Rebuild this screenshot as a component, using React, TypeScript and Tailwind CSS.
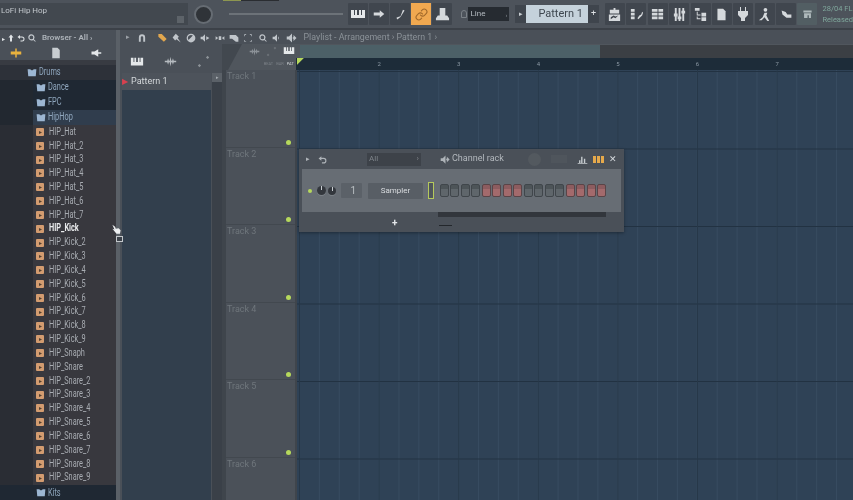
import type { ReactNode } from "react";
import { Link } from "lucide-react";

const hats = ["HIP_Hat", "HIP_Hat_2", "HIP_Hat_3", "HIP_Hat_4", "HIP_Hat_5", "HIP_Hat_6", "HIP_Hat_7"];
const kicks = ["HIP_Kick", "HIP_Kick_2", "HIP_Kick_3", "HIP_Kick_4", "HIP_Kick_5", "HIP_Kick_6", "HIP_Kick_7", "HIP_Kick_8", "HIP_Kick_9"];
const snares = ["HIP_Snaph", "HIP_Snare", "HIP_Snare_2", "HIP_Snare_3", "HIP_Snare_4", "HIP_Snare_5", "HIP_Snare_6", "HIP_Snare_7", "HIP_Snare_8", "HIP_Snare_9"];
const samples = [...hats, ...kicks, ...snares];

function Glyph({ size = 14, children, className }: { size?: number; children: ReactNode; className?: string }) {
  return (
    <svg width={size} height={size} viewBox="0 0 16 16" fill="currentColor" className={className}>
      {children}
    </svg>
  );
}

function ToolButton({ children, active = false }: { children: ReactNode; active?: boolean }) {
  return (
    <div
      className={
        active
          ? "flex h-[22px] w-[20px] items-center justify-center bg-[#f0a850] text-[#a0682a]"
          : "flex h-[22px] w-[20px] items-center justify-center rounded-[1px] bg-[#40464e] text-[#d5d9dc]"
      }
    >
      {children}
    </div>
  );
}

function Knob({ size }: { size: number }) {
  return (
    <div
      className="flex justify-center rounded-full bg-[#33373d] shadow-[0_1px_0_#7b8187]"
      style={{ width: size, height: size }}
    >
      <div className="h-[4px] w-[1px] bg-[#c9ced2]" />
    </div>
  );
}

function FolderIcon() {
  return (
    <Glyph size={10} className="mr-[2px] shrink-0 text-[#9cb6d2]">
      <path d="M1 2h4l3 2 3-2h4l-1 11H2z" />
    </Glyph>
  );
}

function FolderRow({ name, left, bg }: { name: string; left: string; bg: string }) {
  return (
    <div className={`flex h-[15px] shrink-0 items-center ${bg} ${left}`}>
      <FolderIcon />
      <span className="origin-left scale-x-[0.67] text-[11px] text-[#8fa6bd]">{name}</span>
    </div>
  );
}

function Browser() {
  return (
    <div className="flex w-[116px] shrink-0 flex-col bg-[#303239]">
      <div className="flex h-[16px] shrink-0 items-center gap-[2px] bg-[#4a5058] pl-[2px] text-[#dfe3e6]">
        <span className="text-[6px]">▸</span>
        <Glyph size={8}><path d="M8 1l5 6H10v8H6V7H3z" /></Glyph>
        <Glyph size={8}><path d="M6 2L1 6l5 4V7h4a3 3 0 010 6H7v2h3a5 5 0 000-10H6z" /></Glyph>
        <Glyph size={10} className="text-[#c5cacf]">
          <path d="M7 2a5 5 0 103 9l3 3 1-1-3-3a5 5 0 00-4-8zm0 2a3 3 0 110 6 3 3 0 010-6z" />
        </Glyph>
        <span className="ml-[3px] text-[8px] font-semibold text-[#aeb4ba]">Browser - All ›</span>
      </div>
      <div className="flex h-[14px] shrink-0 items-center justify-between bg-[#4a5058] pl-[10px] pr-[14px]">
        <Glyph size={12} className="text-[#e9b23e]">
          <path d="M7 2h2v4h6v4H9v4H7v-4H1V6h6z" />
        </Glyph>
        <Glyph size={12} className="text-[#c8cdd1]">
          <path d="M3 1h7l3 3v11H3z" />
        </Glyph>
        <Glyph size={12} className="text-[#e4e7ea]">
          <path d="M15 7H11V3L6 6H2v4h4l5 3V9h4z" />
        </Glyph>
      </div>
      <div className="h-[5px] shrink-0 bg-[#383b42]" />
      <div className="flex min-h-0 flex-1 flex-col">
        <FolderRow name="Drums" left="pl-[27px]" bg="bg-[#2d3139]" />
        <div className="flex shrink-0">
          <div className="w-[33px] bg-[#222830]" />
          <div className="flex-1">
            <FolderRow name="Dance" left="pl-[3px]" bg="bg-[#1f2833]" />
            <FolderRow name="FPC" left="pl-[3px]" bg="bg-[#1f2833]" />
          </div>
        </div>
        <div className="flex shrink-0">
          <div className="w-[33px] bg-[#222830]" />
          <div className="flex-1">
            <FolderRow name="HipHop" left="pl-[3px]" bg="bg-[#303d4d]" />
          </div>
        </div>
        <div className="flex shrink-0">
          <div className="w-[33px] bg-[#2a2d34]" />
          <div className="flex-1 bg-[#38383e] pl-[3px]">
            {samples.map((s) => (
              <div key={s} className="flex h-[13.84px] items-center">
                <div className="mr-[5px] flex h-[8px] w-[8px] shrink-0 items-center justify-center rounded-[1px] bg-[#d39c70] text-[6px] leading-none text-[#54402f]">
                  ▸
                </div>
                <span
                  className={
                    s === "HIP_Kick"
                      ? "origin-left scale-x-[0.67] text-[11px] font-bold text-[#e8eaec]"
                      : "origin-left scale-x-[0.67] text-[11px] text-[#a8acb2]"
                  }
                >
                  {s}
                </span>
              </div>
            ))}
          </div>
        </div>
        <div className="flex flex-1 items-center bg-[#1f2833] pl-[36px]">
          <FolderIcon />
          <span className="origin-left scale-x-[0.67] text-[11px] text-[#8fa6bd]">Kits</span>
        </div>
      </div>
    </div>
  );
}

function TopBar() {
  return (
    <div className="relative flex h-[30px] shrink-0 items-center border-b-2 border-[#3c4148] bg-[#4d535b]">
      <div className="absolute left-[223px] top-0 flex h-[1px]">
        <div className="w-[18px] bg-[#8d9650]" />
        <div className="w-[38px] bg-[#2a2d31]" />
      </div>
      <div className="flex h-[22px] w-[189px] bg-[#42484f] pl-[1px] pt-[2px]">
        <span className="text-[8px] text-[#c2c7cc]">LoFi Hip Hop</span>
        <div className="ml-auto mr-[4px] mt-[11px] h-[7px] w-[7px] bg-[#5d6369]" />
      </div>
      <div className="ml-[5px] flex w-[20px] justify-center">
        <div className="h-[19px] w-[19px] rounded-full border-2 border-[#666c73] bg-[#2f3338]" />
      </div>
      <div className="ml-[16px] h-[2px] w-[115px] bg-[#6c7278]" />
      <div className="ml-[5px] flex gap-[1px]">
        <ToolButton>
          <Glyph size={16} className="text-[#e4e7e9]">
            <path d="M1 4h14v8H1zM4 4v5h1V4zm3 0v5h2V4zm4 0v5h1V4z" />
          </Glyph>
        </ToolButton>
        <ToolButton>
          <Glyph size={12}><path d="M1 6h8V3l6 5-6 5v-3H1z" /></Glyph>
        </ToolButton>
        <ToolButton>
          <Glyph size={13}><path d="M11 2l2 1-5 8-4 3-1-2 2-1 3-1z" /></Glyph>
        </ToolButton>
        <ToolButton active>
          <Link size={13} strokeWidth={2} />
        </ToolButton>
        <ToolButton>
          <Glyph size={15}>
            <path d="M5 1h6v8h2l2 3v2H1v-2l2-3h2z" />
          </Glyph>
        </ToolButton>
      </div>
      <div className="ml-[9px] h-[8px] w-[6px] rounded-t-full border border-[#7b8187]" />
      <div className="ml-[1px] flex h-[14px] w-[41px] items-center justify-between bg-[#262b31] px-[2px]">
        <span className="text-[8px] text-[#b5bbc1]">Line</span>
        <span className="text-[6px] text-[#8d949a]">›</span>
      </div>
      <div className="ml-[6px] flex h-[18px] w-[11px] items-center justify-center bg-[#3f454d] text-[7px] text-[#c8cdd1]">▸</div>
      <div className="flex h-[18px] w-[62px] items-center justify-end bg-[#c5d2db] pr-[5px] text-[11px] text-[#3f4850]">
        Pattern 1
      </div>
      <div className="flex h-[18px] w-[11px] items-center justify-center bg-[#3f454d] text-[9px] text-[#e0e3e6]">+</div>
      <div className="ml-[6px] flex gap-[1.4px]">
        <ToolButton><Glyph size={15}><path d="M3 3h4V1h2v2h4v4H3zM2 8h12v7H2zm2 5l3-2 2 1 3-3-3 1-2-1-3 2z" /></Glyph></ToolButton>
        <ToolButton><Glyph size={15}><path d="M2 2h4v3H2zm0 4h4v3H2zm0 4h4v3H2zm7 2l2-3 2-1 1-3 1 1-1 3-2 2-2 2z" /></Glyph></ToolButton>
        <ToolButton><Glyph size={15}><path d="M2 2h6v3H2zm7 0h5v3H9zM2 6h6v3H2zm7 0h5v3H9zM2 10h6v3H2zm7 0h5v3H9z" /></Glyph></ToolButton>
        <ToolButton><Glyph size={15}><path d="M3 1h2v6h1v3H5v5H3v-5H2V7h1zm8 0h2v3h1v3h-1v8h-2V7h-1V4h1zM7 1h2v9h1v3H9v2H7v-2H6v-3h1z" /></Glyph></ToolButton>
        <ToolButton><Glyph size={15}><path d="M2 1h5v3H2zm2 4h1v3h3v1H4zm0 5h1v2h3v1H4zm5-4h5v4H9zm0 5h5v4H9z" /></Glyph></ToolButton>
        <ToolButton><Glyph size={13}><path d="M3 1h7l3 3v11H3z" /></Glyph></ToolButton>
        <ToolButton><Glyph size={16}><path d="M5 1h1v4h4V1h1v4h2v4l-3 3v3H6v-3L3 9V5h2z" /></Glyph></ToolButton>
        <ToolButton><Glyph size={15}><path d="M9 1a2 2 0 110 4 2 2 0 010-4zM8 6l-2 5-4 3h3l3-3 3 4h2l-3-6 1-3z" /></Glyph></ToolButton>
        <ToolButton><Glyph size={13}><path d="M2 3l5 2 2 3h5v4H8L3 8z" /></Glyph></ToolButton>
        <div className="flex h-[22px] w-[20px] items-center justify-center rounded-[1px] bg-[#525e63] text-[#aeb9bb]">
          <Glyph size={11}><path d="M2 2h12v3H2zm1 4h10v7h-3v-4H8v4H3z" /></Glyph>
        </div>
      </div>
      <div className="ml-[5px] flex flex-col text-[7.5px] leading-[11px] text-[#7fa69b]">
        <span className="whitespace-nowrap">28/04 FL</span>
        <span>Released</span>
      </div>
    </div>
  );
}

function PlaylistHeader() {
  return (
    <div className="flex h-[14px] shrink-0 items-center gap-[4.3px] bg-[#4a5058] pl-[6px] pt-[1px] text-[#c0c5ca]">
      <span className="mr-[3px] text-[7px] text-[#9aa0a6]">▸</span>
      <Glyph size={10} className="mr-[5px]"><path d="M3 14V7a5 5 0 0110 0v7h-3V7a2 2 0 00-4 0v7z" /></Glyph>
      <Glyph size={11} className="text-[#e2a74e]"><path d="M2 3h5l7 7-4 4-8-7z" /></Glyph>
      <Glyph size={10}><path d="M6 1l5 5-2 2 5 7-7-5-2 2-4-5z" /></Glyph>
      <Glyph size={10}><path d="M8 1a7 7 0 100 14A7 7 0 008 1zm0 2a5 5 0 013 1l-7 7a5 5 0 014-8z" /></Glyph>
      <Glyph size={10}><path d="M1 6h3l4-4v12l-4-4H1zm9-1l5 3-5 3z" /></Glyph>
      <Glyph size={10}><path d="M1 5l4 3-4 3zm14 0v6l-4-3zM6 5h4v6H6z" /></Glyph>
      <Glyph size={10}><path d="M1 3h10l4 4v7h-4L5 9H1z" /></Glyph>
      <Glyph size={10}><path d="M2 2h3v1H3v2H2zm9 0h3v3h-1V3h-2zM2 11h1v2h2v1H2zm11 0h1v3h-3v-1h2z" /></Glyph>
      <Glyph size={10}><path d="M7 2a5 5 0 103 9l3 3 1-1-3-3a5 5 0 00-4-8zm0 2a3 3 0 110 6 3 3 0 010-6z" /></Glyph>
      <Glyph size={10}><path d="M1 6h3l4-4v12l-4-4H1zm9 0h1v4h-1z" /></Glyph>
      <Glyph size={12}><path d="M1 6h3l4-4v12l-4-4H1zm9-2l4 4-4 4V9h-1V7h1z" /></Glyph>
      <span className="ml-[1px] whitespace-nowrap text-[8.8px] text-[#8b9298]">Playlist - Arrangement › Pattern 1 ›</span>
    </div>
  );
}

function Picker() {
  return (
    <div className="flex w-[102px] shrink-0 flex-col bg-[#4a5058]">
      <div className="flex h-[29px] shrink-0 items-center justify-between pl-[10px] pr-[12px] pt-[6px] text-[#e5e8ea]">
        <Glyph size={14}><path d="M1 3h14v9H1zM4 3v5h1V3zm3 0v5h2V3zm4 0v5h1V3z" /></Glyph>
        <Glyph size={13} className="text-[#b5babf]"><path d="M1 7h3l1-3 1 3h1l1-5 1 5h1l1-3 1 3h3v2h-3l-1 3-1-3H9l-1 5-1-5H6l-1 3-1-3H1z" /></Glyph>
        <Glyph size={13} className="text-[#8d9398]"><path d="M13 1l2 2-2 2-1-1-8 8 1 1-2 2-2-2 2-2 1 1 8-8-1-1z" /></Glyph>
      </div>
      <div className="flex flex-1">
        <div className="ml-[2px] flex w-[89px] flex-col bg-[#323f4d]">
          <div className="flex h-[17px] items-center bg-[#4d535b]">
            <span className="mr-[3px] text-[8px] leading-none text-[#d8414f]">▶</span>
            <span className="text-[9px] text-[#d3d7da]">Pattern 1</span>
          </div>
        </div>
        <div className="ml-[1px] w-[10px] bg-[#3a4048]">
          <div className="flex h-[9px] items-center justify-center bg-[#5b6168] text-[5px] text-[#a8adb2]">▸</div>
        </div>
      </div>
    </div>
  );
}

function TrackCell({ n }: { n: number }) {
  return (
    <div className="relative h-[77.5px] shrink-0 border-b border-[#42484f] bg-[#4b5159] pl-[1px] pt-[1px]">
      <span className="block text-[9px] leading-[11px] text-[#6f767c]">Track {n}</span>
      <div className="absolute bottom-[2px] right-[4px] h-[5px] w-[5px] rounded-full bg-[#b6d95c]" />
    </div>
  );
}

function Arrangement() {
  return (
    <div className="relative flex min-w-0 flex-1 flex-col bg-[#50565d]">
      <div className="absolute left-0 top-0 h-[26px] w-[20px] bg-[#42484f] [clip-path:polygon(0_0,100%_0,30%_100%,0_100%)]" />
      <div className="relative flex h-[14px] shrink-0 items-center">
        <div className="flex h-full w-[78px] items-center gap-[6px] pl-[27px] text-[#8b9197]">
          <Glyph size={11}><path d="M1 7h3l1-3 1 3h1l1-5 1 5h1l1-3 1 3h3v2h-3l-1 3-1-3H9l-1 5-1-5H6l-1 3-1-3H1z" /></Glyph>
          <Glyph size={11} className="text-[#6d7379]"><path d="M13 1l2 2-2 2-1-1-8 8 1 1-2 2-2-2 2-2 1 1 8-8-1-1z" /></Glyph>
          <Glyph size={12} className="text-[#e5e8ea]"><path d="M1 3h14v9H1zM4 3v5h1V3zm3 0v5h2V3zm4 0v5h1V3z" /></Glyph>
        </div>
        <div className="flex h-[13px] flex-1">
          <div className="w-[300px] bg-[#4c6067]" />
          <div className="flex-1 bg-[#3b3f44]" />
        </div>
      </div>
      <div className="relative flex h-[12px] shrink-0">
        <div className="flex w-[75px] items-center justify-end gap-[3px] pr-[2px] text-[4px] text-[#7b8187]">
          <span>BEAT</span>
          <span>BAR</span>
          <span className="text-[#cfd3d6]">PAT</span>
        </div>
        <div className="relative flex flex-1 bg-[#1d2c39]">
          <div className="absolute left-[1px] top-0 h-[7px] w-[7px] bg-[#b6d95c] [clip-path:polygon(0_0,100%_0,0_100%)]" />
          {[0, 2, 3, 4, 5, 6, 7].map((n) => (
            <div key={n} className="w-[79.6px] pl-[2px]">
              {n > 1 && <span className="block text-[6px] leading-[12px] text-[#8b98a3]">{n}</span>}
            </div>
          ))}
        </div>
      </div>
      <div className="flex min-h-0 flex-1 bg-[#3f454c]">
        <div className="ml-[4px] flex w-[69px] shrink-0 flex-col">
          {[1, 2, 3, 4, 5, 6].map((n) => (
            <TrackCell key={n} n={n} />
          ))}
        </div>
        <div className="ml-[2px] flex-1 bg-[#2f4256] bg-[linear-gradient(to_right,#263748_1px,transparent_1px),linear-gradient(to_bottom,#223242_1px,transparent_1px),linear-gradient(to_right,#374b60_1px,transparent_1px)] bg-[size:79.6px_77.5px,79.6px_77.5px,19.9px_19.9px] bg-[position:2px_1px,2px_1px,2px_0]" />
      </div>
    </div>
  );
}

function ChannelRack() {
  const steps = Array.from({ length: 16 }, (_, i) => Math.floor(i / 4) % 2 === 1);
  return (
    <div className="absolute left-[299px] top-[149px] flex h-[83px] w-[325px] flex-col bg-[#4a5058] shadow-[0_1px_3px_rgba(0,0,0,0.35)]">
      <div className="flex h-[20px] shrink-0 items-center pl-[7px] text-[#aeb3b8]">
        <span className="text-[7px]">▸</span>
        <Glyph size={9} className="ml-[8px]"><path d="M6 2L1 6l5 4V7h4a3 3 0 010 6H7v2h3a5 5 0 000-10H6z" /></Glyph>
        <div className="ml-[40px] flex h-[13px] w-[54px] items-center justify-between bg-[#3d4249] px-[2px] text-[8px] text-[#7f858b]">
          <span>All</span>
          <span>›</span>
        </div>
        <Glyph size={11} className="ml-[19px]"><path d="M1 6h3l4-4v12l-4-4H1zm9-2l4 4-4 4V9h-1V7h1z" /></Glyph>
        <span className="ml-[1px] text-[9px] text-[#b3b8bd]">Channel rack</span>
        <div className="ml-[24px] h-[13px] w-[13px] rounded-full bg-[#53595f]" />
        <div className="ml-[10px] h-[8px] w-[16px] bg-[#4f555c]" />
        <Glyph size={11} className="ml-[10px] text-[#c7ccd0]"><path d="M1 13h14v1H1zM3 9h2v4H3zm3-5h2v9H6zm4 3h2v6h-2z" /></Glyph>
        <div className="ml-[5px] flex h-[7px] w-[11px] gap-[1px]">
          <div className="w-[3px] bg-[#e6a94b]" />
          <div className="w-[3px] bg-[#e6a94b]" />
          <div className="w-[3px] bg-[#e6a94b]" />
        </div>
        <span className="ml-[5px] text-[9px] leading-none text-[#d5d9dc]">✕</span>
      </div>
      <div className="mx-[3px] flex h-[43px] shrink-0 items-center bg-[#676d74] pl-[6px]">
        <div className="h-[4px] w-[4px] rounded-full bg-[#b6d95c]" />
        <div className="ml-[4.5px]"><Knob size={9} /></div>
        <div className="ml-[2.5px]"><Knob size={8} /></div>
        <div className="ml-[5px] flex h-[15px] w-[21px] items-center justify-end rounded-[1px] bg-[#5b6168] pr-[6px] text-[10px] text-[#b9bec2]">1</div>
        <div className="ml-[6px] flex h-[16px] w-[55px] items-center justify-center rounded-[1px] bg-[#585e65] text-[8px] text-[#d9dcdf]">Sampler</div>
        <div className="ml-[5px] h-[17px] w-[6px] border border-[#b5c95c] bg-[#50565c]" />
        <div className="ml-[6px] flex gap-[1.47px]">
          {steps.map((red, i) => (
            <div
              key={i}
              className={
                red
                  ? "h-[13px] w-[9px] rounded-[2px] border border-[#5a4447] bg-[linear-gradient(to_bottom,#8d5c5f_35%,#a36a6c_35%)]"
                  : "h-[13px] w-[9px] rounded-[2px] border border-[#40464b] bg-[linear-gradient(to_bottom,#4d5458_35%,#5f666b_35%)]"
              }
            />
          ))}
        </div>
      </div>
      <div className="relative flex-1">
        <div className="ml-[139px] h-[5px] w-[168px] bg-[#32363c]" />
        <span className="absolute left-[93px] top-[6px] text-[10px] font-bold leading-none text-[#e4e7ea]">+</span>
        <div className="ml-[140px] mt-[8px] h-[1px] w-[13px] bg-[#23272c]" />
      </div>
    </div>
  );
}

function Pointer() {
  return (
    <div className="absolute left-[111px] top-[224px]">
      <Glyph size={11} className="text-[#eceef0]"><path d="M2 1l4 3 1 3 4-1 3 3-1 5H8L2 7l3 1z" /></Glyph>
      <div className="ml-[5px] mt-[1px] h-[6px] w-[7px] border border-[#c3c7cb] bg-[#3c424a]" />
    </div>
  );
}

export default function App() {
  return (
    <div className="relative flex h-[500px] w-[853px] flex-col overflow-hidden bg-[#4a5058] blur-[0.5px] [font-family:'Roboto',sans-serif]">
      <TopBar />
      <div className="flex min-h-0 flex-1">
        <Browser />
        <div className="w-[4px] shrink-0 bg-[#5a6067]" />
        <div className="flex min-w-0 flex-1 flex-col">
          <PlaylistHeader />
          <div className="flex min-h-0 flex-1">
            <Picker />
            <Arrangement />
          </div>
        </div>
      </div>
      <ChannelRack />
      <Pointer />
    </div>
  );
}
